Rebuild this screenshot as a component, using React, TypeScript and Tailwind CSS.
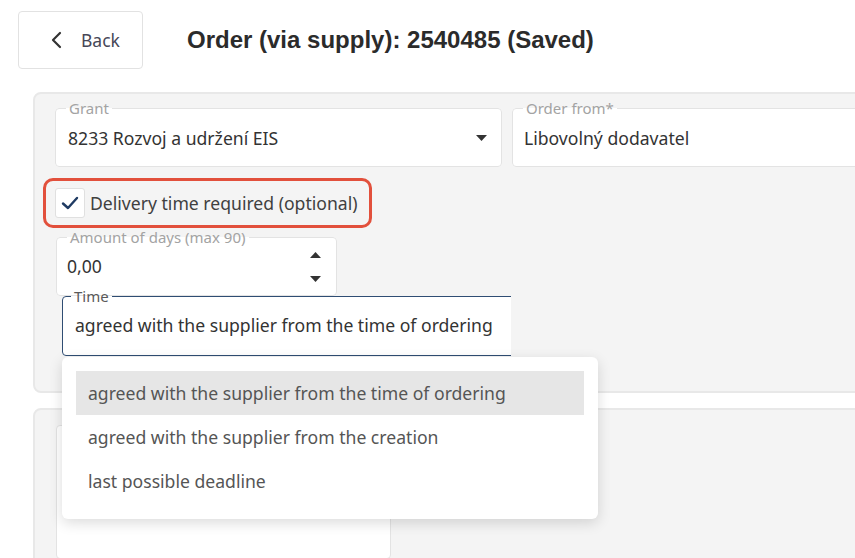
import React from 'react';

const font = { fontFamily: '"Noto Sans", "Open Sans", sans-serif' };

const Caret: React.FC<{ up?: boolean }> = ({ up }) => (
  <svg width="11" height="6" viewBox="0 0 11 6" className="block">
    {up ? <path d="M0 6 L5.5 0 L11 6 Z" fill="#333" /> : <path d="M0 0 L5.5 6 L11 0 Z" fill="#333" />}
  </svg>
);

const Field: React.FC<{ label: string; className?: string; children: React.ReactNode }> = ({ label, className, children }) => (
  <fieldset className={`m-0 min-w-0 shrink-0 rounded-[4px] border border-[#e3e3e3] bg-white p-0 ${className ?? ''}`}>
    <legend className="ml-[10px] px-[3px] text-[15px] leading-[16px] text-[#a3a3a3]">{label}</legend>
    {children}
  </fieldset>
);

const options = [
  'agreed with the supplier from the time of ordering',
  'agreed with the supplier from the creation',
  'last possible deadline',
];

export default function App() {
  return (
    <div className="relative h-[558px] w-[855px] overflow-hidden bg-white text-[#3a3a3a]" style={font}>
      {/* header */}
      <div className="flex items-center pl-[18px] pt-[11px]">
        <button className="flex h-[58px] w-[125px] shrink-0 items-center gap-[17px] rounded-[4px] border border-[#e2e2e2] bg-white pl-[31px] text-[17.5px] text-[#474757]">
          <svg width="14" height="18" viewBox="0 0 14 18">
            <path d="M10 2 L3 9 L10 16" fill="none" stroke="#333" strokeWidth="2.2" strokeLinecap="round" strokeLinejoin="round" />
          </svg>
          <span>Back</span>
        </button>
        <h1 className="ml-[44px] whitespace-nowrap text-[24px] font-bold text-[#2b2b2b]" style={{ fontFamily: '"Liberation Sans", Arial, sans-serif' }}>
          Order (via supply): 2540485 (Saved)
        </h1>
      </div>

      {/* panel 1 */}
      <div className="ml-[33px] mt-[23px] h-[301px] w-[920px] rounded-[8px] border-2 border-[#e8e8e8] bg-[#f4f4f4] pl-[20px] pt-[6px]">
        <div className="flex gap-[10px]">
          <Field label="Grant" className="w-[447px]">
            <div className="flex h-[50px] items-center justify-between pb-[6px] pl-[12px] pr-[14px] text-[17.6px] text-[#333]">
              <span>8233 Rozvoj a udržení EIS</span>
              <Caret />
            </div>
          </Field>
          <Field label="Order from*" className="w-[447px]">
            <div className="flex h-[50px] items-center pb-[6px] pl-[11px] text-[17.6px] text-[#333]">Libovolný dodavatel</div>
          </Field>
        </div>

        <div className="ml-[-12px] mt-[11px] inline-flex h-[50px] items-center gap-[5px] rounded-[10px] border-[3px] border-[#e2503c] pl-[9px] pr-[11px]">
          <span className="flex h-[30px] w-[30px] items-center justify-center rounded-[3px] border border-[#e0e0e0] bg-white">
            <svg width="18" height="14" viewBox="0 0 18 14">
              <path d="M2 7.5 L7 12 L16 2" fill="none" stroke="#1f3b63" strokeWidth="2.4" strokeLinecap="round" strokeLinejoin="round" />
            </svg>
          </span>
          <span className="text-[17.6px] text-[#404040]">Delivery time required (optional)</span>
        </div>

        <Field label="Amount of days (max 90)" className="ml-[1px] mt-[1px] w-[281px]">
          <div className="flex h-[50px] items-center justify-between pb-[8px] pl-[10px] pr-[15px] text-[17.6px] text-[#333]">
            <span>0,00</span>
            <div className="flex flex-col gap-[18px] pt-[2px]">
              <Caret up />
              <Caret />
            </div>
          </div>
        </Field>

        <div className="-mt-[12px] ml-[7px] w-[449px] overflow-hidden pt-[4px]">
          <fieldset className="m-0 w-[470px] rounded-[4px] border border-[#2f4d73] bg-white p-0">
            <legend className="ml-[8px] px-[3px] text-[15px] leading-[16px] text-[#5a5a5a]">Time</legend>
            <div className="flex h-[51px] items-center whitespace-nowrap pb-[8px] pl-[12px] text-[17.6px] text-[#333]">
              agreed with the supplier from the time of ordering
            </div>
          </fieldset>
        </div>
      </div>

      {/* panel 2 */}
      <div className="ml-[33px] mt-[15px] h-[200px] w-[920px] rounded-[8px] border-2 border-[#e8e8e8] bg-[#f4f4f4] pl-[21px] pt-[15px]">
        <div className="h-[134px] w-[335px] rounded-[4px] border border-[#e3e3e3] bg-white" />
      </div>

      {/* dropdown menu */}
      <div className="absolute left-[62px] top-[357px] w-[536px] rounded-[6px] bg-white px-[14px] pb-[16px] pt-[14px] shadow-[0_4px_14px_rgba(0,0,0,0.14)]">
        {options.map((o, i) => (
          <div
            key={o}
            className={`flex h-[44px] items-center whitespace-nowrap pl-[12px] text-[17.6px] text-[#555] ${i === 0 ? 'bg-[#e6e6e6]' : ''}`}
          >
            {o}
          </div>
        ))}
      </div>
    </div>
  );
}
